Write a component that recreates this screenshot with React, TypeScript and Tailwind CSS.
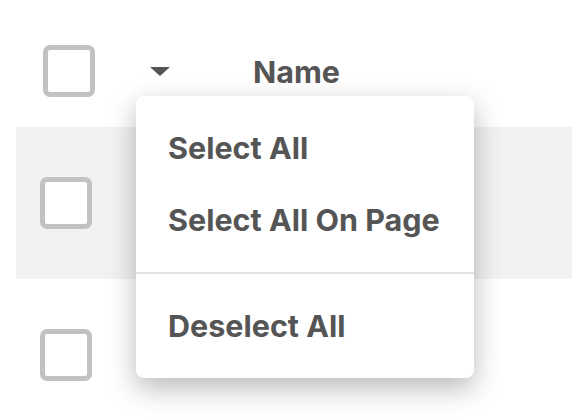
import React from 'react'

function Box({ className = '' }: { className?: string }) {
  return <div className={`h-[52px] w-[52px] rounded-[7px] border-[5px] border-[#c2c2c2] bg-white ${className}`} />
}

const font = { fontFamily: 'Inter, "Noto Sans", sans-serif' }

export default function App() {
  return (
    <div className="relative h-[420px] w-[572px] overflow-hidden bg-white" style={font}>
      <div className="pl-4">
        {/* header */}
        <div className="flex h-[127px] items-start pt-[45px]">
          <Box className="ml-[27px]" />
          <button className="ml-[55px] mt-[22px] flex h-[10px] w-[20px] items-start justify-center">
            <span className="block h-0 w-0 border-x-[10px] border-t-[9px] border-x-transparent border-t-[#555]" />
          </button>
          <span className="ml-[83px] mt-[12px] text-[30.5px] leading-none font-bold text-[#555]">Name</span>
        </div>
        {/* rows */}
        <div className="flex h-[152px] items-center bg-[#f2f2f2]">
          <Box className="ml-6" />
        </div>
        <div className="flex h-[152px] items-center">
          <Box className="ml-6" />
        </div>
      </div>

      {/* dropdown menu */}
      <div className="absolute left-[136px] top-[96px] w-[338px] rounded-lg bg-white py-4 shadow-[0_10px_28px_rgba(0,0,0,0.28)]">
        <div className="flex h-[72px] items-center px-8 text-[30.5px] font-bold text-[#555]">Select All</div>
        <div className="flex h-[72px] items-center px-8 text-[30.5px] font-bold text-[#555]">Select All On Page</div>
        <div className="my-4 h-[2px] bg-[#e2e2e2]" />
        <div className="flex h-[72px] items-center px-8 text-[30.5px] font-bold text-[#555]">Deselect All</div>
      </div>
    </div>
  )
}
